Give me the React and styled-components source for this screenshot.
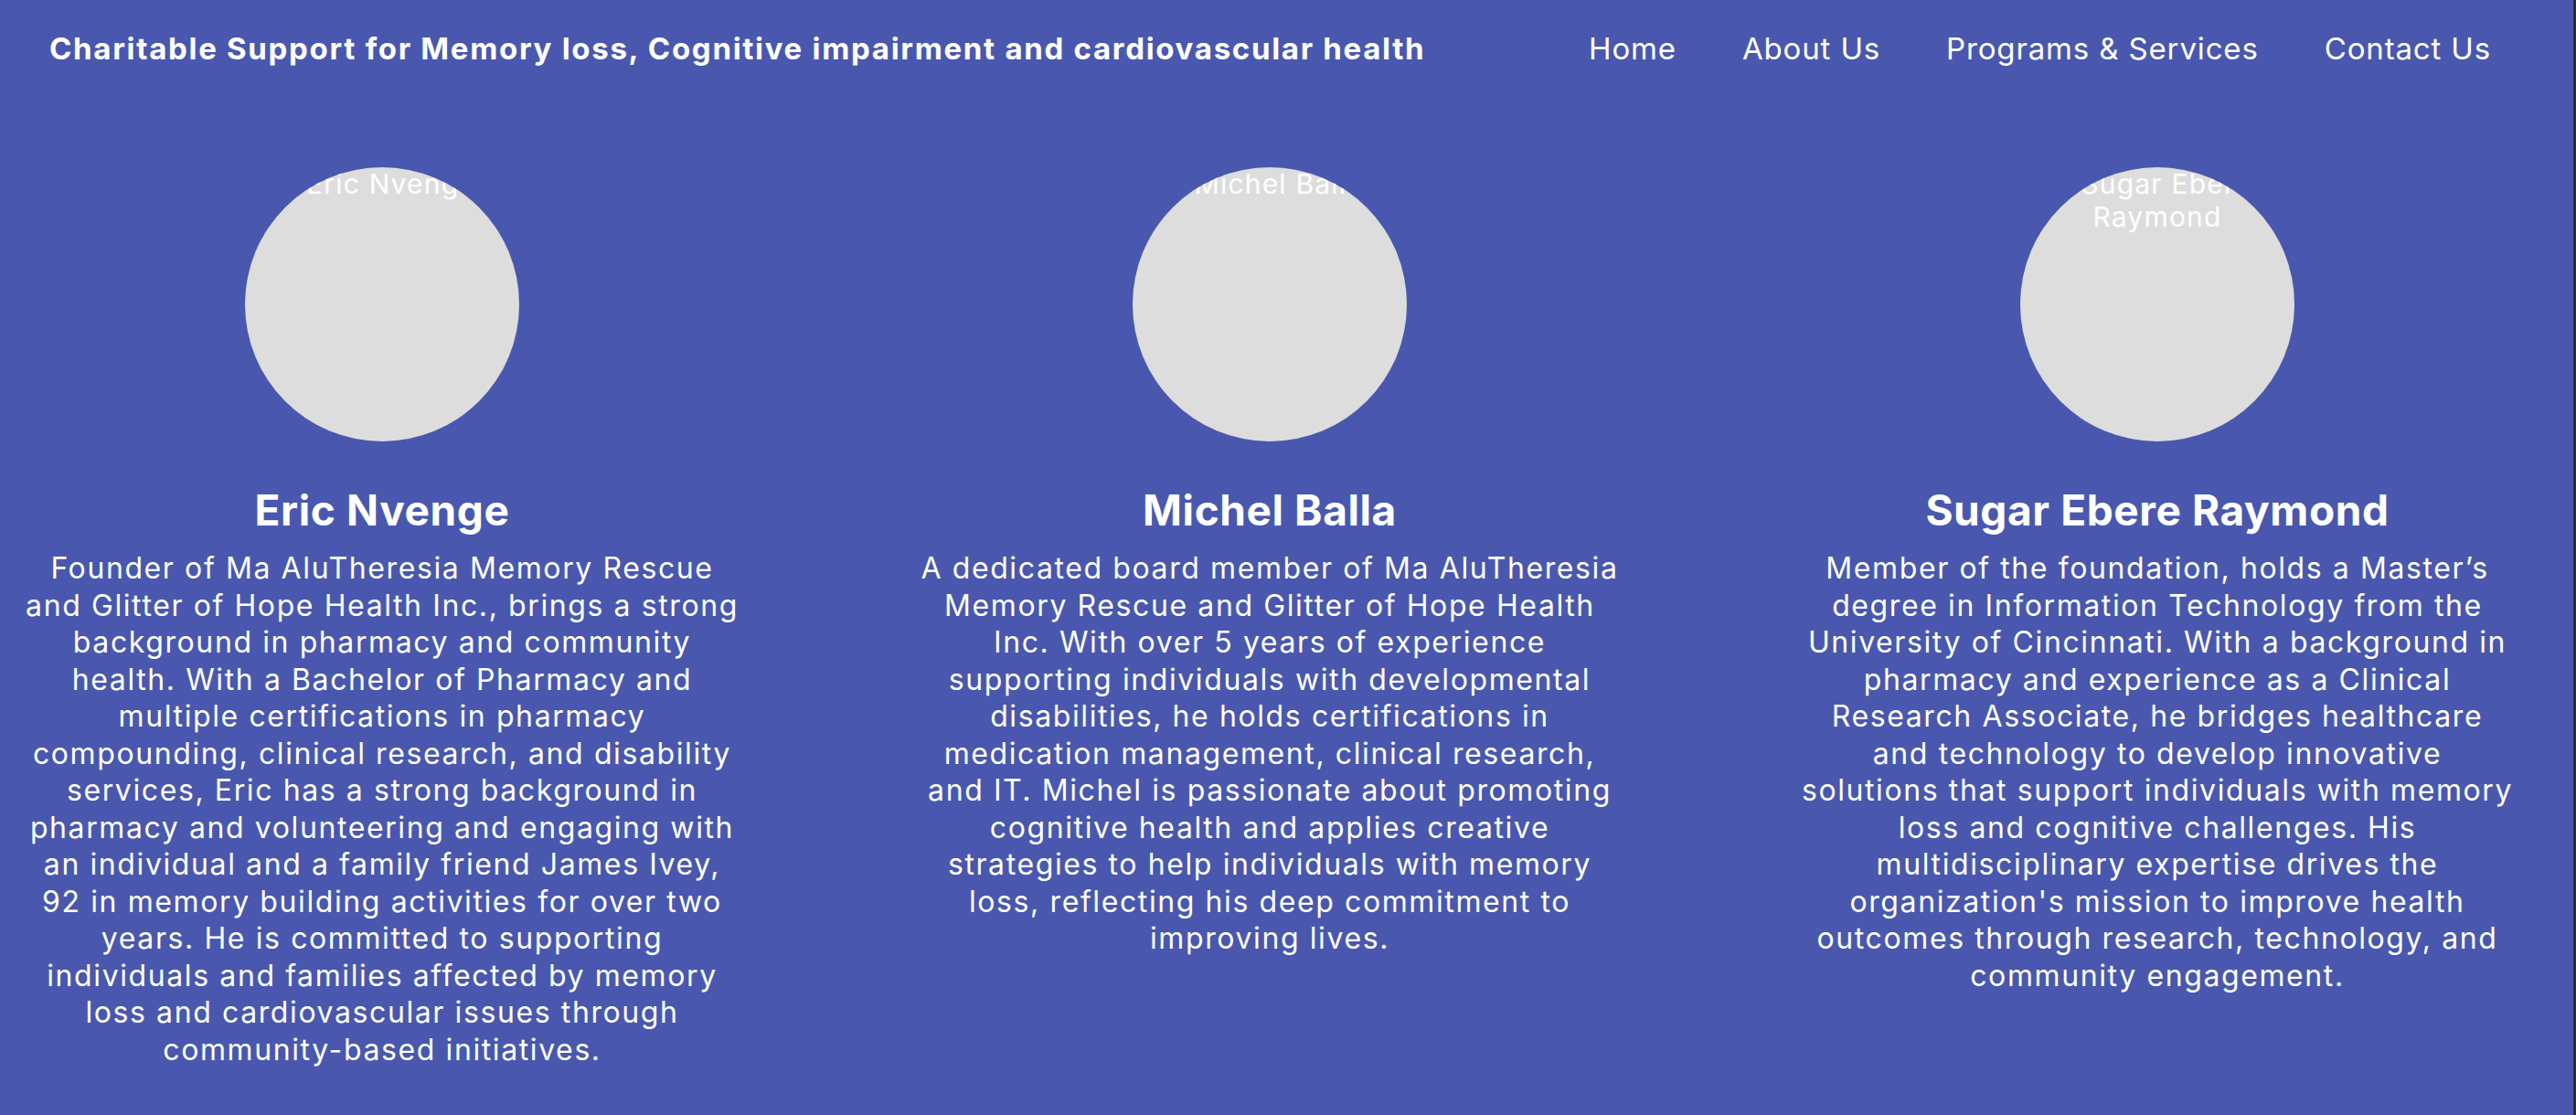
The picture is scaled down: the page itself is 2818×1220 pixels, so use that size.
import React from "react";
import styled, { createGlobalStyle } from "styled-components";

const GlobalStyle = createGlobalStyle`
  html, body {
    margin: 0;
    padding: 0;
    background: #2b2b2b;
  }
  body {
    font-family: Inter, "Noto Sans", "Liberation Sans", sans-serif;
  }
  * { box-sizing: border-box; }
`;

const Page = styled.div`
  min-height: 1220px;
  margin-right: 3px;
  background: #4958ae;
  color: #ffffff;
`;

const Header = styled.header`
  display: flex;
  align-items: center;
  justify-content: space-between;
  padding: 33px 90px 0 54px;
`;

const Title = styled.h1`
  margin: 0;
  font-size: 33px;
  font-weight: 700;
  line-height: normal;
  letter-spacing: 1.7px;
  white-space: nowrap;
`;

const Nav = styled.nav`
  display: flex;
  gap: 72px;
`;

const NavLink = styled.a`
  font-size: 33px;
  font-weight: 400;
  letter-spacing: 0.85px;
  color: #ffffff;
  text-decoration: none;
  line-height: normal;
  white-space: nowrap;
`;

const Team = styled.section`
  display: grid;
  grid-template-columns: repeat(3, 784px);
  column-gap: 187px;
  padding: 110px 0 0 26px;
`;

const Member = styled.article`
  display: flex;
  flex-direction: column;
  align-items: center;
  text-align: center;
`;

const Photo = styled.div`
  width: 300px;
  height: 300px;
  border-radius: 50%;
  background: #dddddd;
  overflow: hidden;
  font-size: 30px;
  letter-spacing: 1.2px;
  line-height: normal;
  color: #ffffff;
  text-align: center;
`;

const BrokenIcon = styled.span`
  display: inline-block;
  width: 16px;
  height: 16px;
  margin-right: 4px;
`;

const Name = styled.h2`
  margin: 47px 0 16px;
  font-size: 46px;
  font-weight: 700;
  letter-spacing: 0.6px;
  line-height: normal;
`;

const Bio = styled.p`
  margin: 0;
  font-size: 32px;
  letter-spacing: 1.6px;
  line-height: 40.5px;
  font-weight: 400;
  white-space: nowrap;
`;

const Line = styled.span`
  display: block;
`;

const members = [
  {
    name: "Eric Nvenge",
    bio: [
      "Founder of Ma AluTheresia Memory Rescue",
      "and Glitter of Hope Health Inc., brings a strong",
      "background in pharmacy and community",
      "health. With a Bachelor of Pharmacy and",
      "multiple certifications in pharmacy",
      "compounding, clinical research, and disability",
      "services, Eric has a strong background in",
      "pharmacy and volunteering and engaging with",
      "an individual and a family friend James Ivey,",
      "92 in memory building activities for over two",
      "years. He is committed to supporting",
      "individuals and families affected by memory",
      "loss and cardiovascular issues through",
      "community-based initiatives.",
    ],
  },
  {
    name: "Michel Balla",
    bio: [
      "A dedicated board member of Ma AluTheresia",
      "Memory Rescue and Glitter of Hope Health",
      "Inc. With over 5 years of experience",
      "supporting individuals with developmental",
      "disabilities, he holds certifications in",
      "medication management, clinical research,",
      "and IT. Michel is passionate about promoting",
      "cognitive health and applies creative",
      "strategies to help individuals with memory",
      "loss, reflecting his deep commitment to",
      "improving lives.",
    ],
  },
  {
    name: "Sugar Ebere Raymond",
    bio: [
      "Member of the foundation, holds a Master\u2019s",
      "degree in Information Technology from the",
      "University of Cincinnati. With a background in",
      "pharmacy and experience as a Clinical",
      "Research Associate, he bridges healthcare",
      "and technology to develop innovative",
      "solutions that support individuals with memory",
      "loss and cognitive challenges. His",
      "multidisciplinary expertise drives the",
      "organization's mission to improve health",
      "outcomes through research, technology, and",
      "community engagement.",
    ],
  },
];

export default function App() {
  return (
    <>
      <GlobalStyle />
      <Page>
        <Header>
          <Title>Charitable Support for Memory loss, Cognitive impairment and cardiovascular health</Title>
          <Nav>
            <NavLink href="#">Home</NavLink>
            <NavLink href="#">About Us</NavLink>
            <NavLink href="#">Programs &amp; Services</NavLink>
            <NavLink href="#">Contact Us</NavLink>
          </Nav>
        </Header>
        <Team>
          {members.map((m) => (
            <Member key={m.name}>
              <Photo role="img" aria-label={m.name}>
                <BrokenIcon />
                {m.name}
              </Photo>
              <Name>{m.name}</Name>
              <Bio>
                {m.bio.map((line, i) => (
                  <Line key={i}>{line}</Line>
                ))}
              </Bio>
            </Member>
          ))}
        </Team>
      </Page>
    </>
  );
}
